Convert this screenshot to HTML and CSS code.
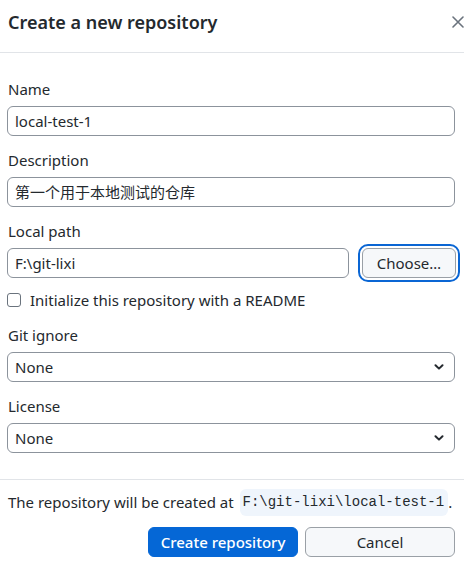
FILE: index.html
```html
<!DOCTYPE html>
<html>
<head>
<meta charset="utf-8">
<link rel="stylesheet" href="styles.css">
</head>
<body>
<div class="dialog">
  <header class="dialog-header">
    <h1 class="title">Create a new repository</h1>
    <button class="close" aria-label="Close">
      <svg width="12" height="12" viewBox="0 0 12 12"><path d="M1 1L11 11M11 1L1 11" stroke="#6a737d" stroke-width="1.6" stroke-linecap="round"/></svg>
    </button>
  </header>
  <form class="dialog-body">
    <div class="field">
      <label class="label">Name</label>
      <div class="input">local-test-1</div>
    </div>
    <div class="field">
      <label class="label">Description</label>
      <div class="input">第一个用于本地测试的仓库</div>
    </div>
    <div class="field">
      <label class="label">Local path</label>
      <div class="path-row">
        <div class="input grow">F:\git-lixi</div>
        <div class="btn choose">Choose…</div>
      </div>
    </div>
    <div class="check-row">
      <span class="checkbox"></span>
      <span class="check-label">Initialize this repository with a README</span>
    </div>
    <div class="field">
      <label class="label">Git ignore</label>
      <div class="input select">None
        <svg class="chev" width="10" height="6" viewBox="0 0 10 6"><path d="M1.5 1.2L5 4.6L8.5 1.2" fill="none" stroke="#24292e" stroke-width="2" stroke-linecap="round" stroke-linejoin="round"/></svg>
      </div>
    </div>
    <div class="field">
      <label class="label">License</label>
      <div class="input select">None
        <svg class="chev" width="10" height="6" viewBox="0 0 10 6"><path d="M1.5 1.2L5 4.6L8.5 1.2" fill="none" stroke="#24292e" stroke-width="2" stroke-linecap="round" stroke-linejoin="round"/></svg>
      </div>
    </div>
  </form>
  <footer class="dialog-footer">
    <p class="note">The repository will be created at <code class="code">F:\git-lixi\local-test-1</code>.</p>
    <div class="actions">
      <div class="btn primary">Create repository</div>
      <div class="btn">Cancel</div>
    </div>
  </footer>
</div>
</body>
</html>
```

FILE: styles.css
```css
* { box-sizing: border-box; }
html, body { margin: 0; background: #fff; }
body {
  font-family: "Noto Sans", "Noto Sans CJK SC", sans-serif;
  font-size: 15px;
  color: #24292e;
}
.dialog { width: 464px; }
.dialog-header {
  height: 53px;
  display: flex;
  align-items: center;
  justify-content: space-between;
  padding: 0 0 8px 8px;
  border-bottom: 1px solid #e1e4e8;
}
.title {
  margin: 0;
  font-size: 18px;
  font-weight: 600;
  color: #24292e;
}
.close {
  border: 0;
  background: none;
  padding: 0;
  width: 12px;
  height: 12px;
  display: flex;
}
.dialog-body {
  display: flex;
  flex-direction: column;
  padding: 26px 9px 26px 7px;
  margin: 0;
}
.field { display: flex; flex-direction: column; gap: 7px; margin-bottom: 14px; }
.label { line-height: 20px; padding-left: 1px; }
.input {
  height: 30px;
  border: 1px solid #8c939c;
  border-radius: 6px;
  padding: 0 7px;
  display: flex;
  align-items: center;
  line-height: 20px;
  color: #24292e;
}
.select { justify-content: space-between; padding-right: 10px; }
.field:last-child { margin-bottom: 0; }
.path-row { display: flex; align-items: center; gap: 13px; }
.grow { flex: 1; }
.btn {
  height: 30px;
  border: 1px solid #9aa0a6;
  border-radius: 6px;
  background: #f6f8fa;
  display: flex;
  align-items: center;
  justify-content: center;
  color: #24292e;
  line-height: 20px;
}
.choose {
  width: 94px;
  margin-right: -1px;
  outline: 2px solid #0a66d4;
  outline-offset: 2px;
}
.check-row {
  display: flex;
  align-items: center;
  gap: 9px;
  height: 20px;
  margin: -2px 0 15px 0;
}
.checkbox {
  width: 14px;
  height: 14px;
  border: 1px solid #6a737d;
  border-radius: 3px;
}
.dialog-footer {
  border-top: 1px solid #e1e4e8;
  padding: 9px 9px 0 8px;
}
.note {
  margin: 0;
  display: flex;
  align-items: center;
  white-space: pre;
  line-height: 27px;
}
.code {
  font-family: "Liberation Mono", monospace;
  font-size: 14px;
  background: #eff5fc;
  border-radius: 6px;
  padding: 0 4px 0 3px;
  margin-left: 2px;
}
.actions {
  display: flex;
  justify-content: flex-end;
  gap: 7px;
  margin-top: 11px;
}
.actions .btn { width: 150px; }
.btn.primary {
  background: #0567d6;
  border-color: #0567d6;
  color: #fff;
  font-weight: 500;
  font-size: 15px;
}
```
